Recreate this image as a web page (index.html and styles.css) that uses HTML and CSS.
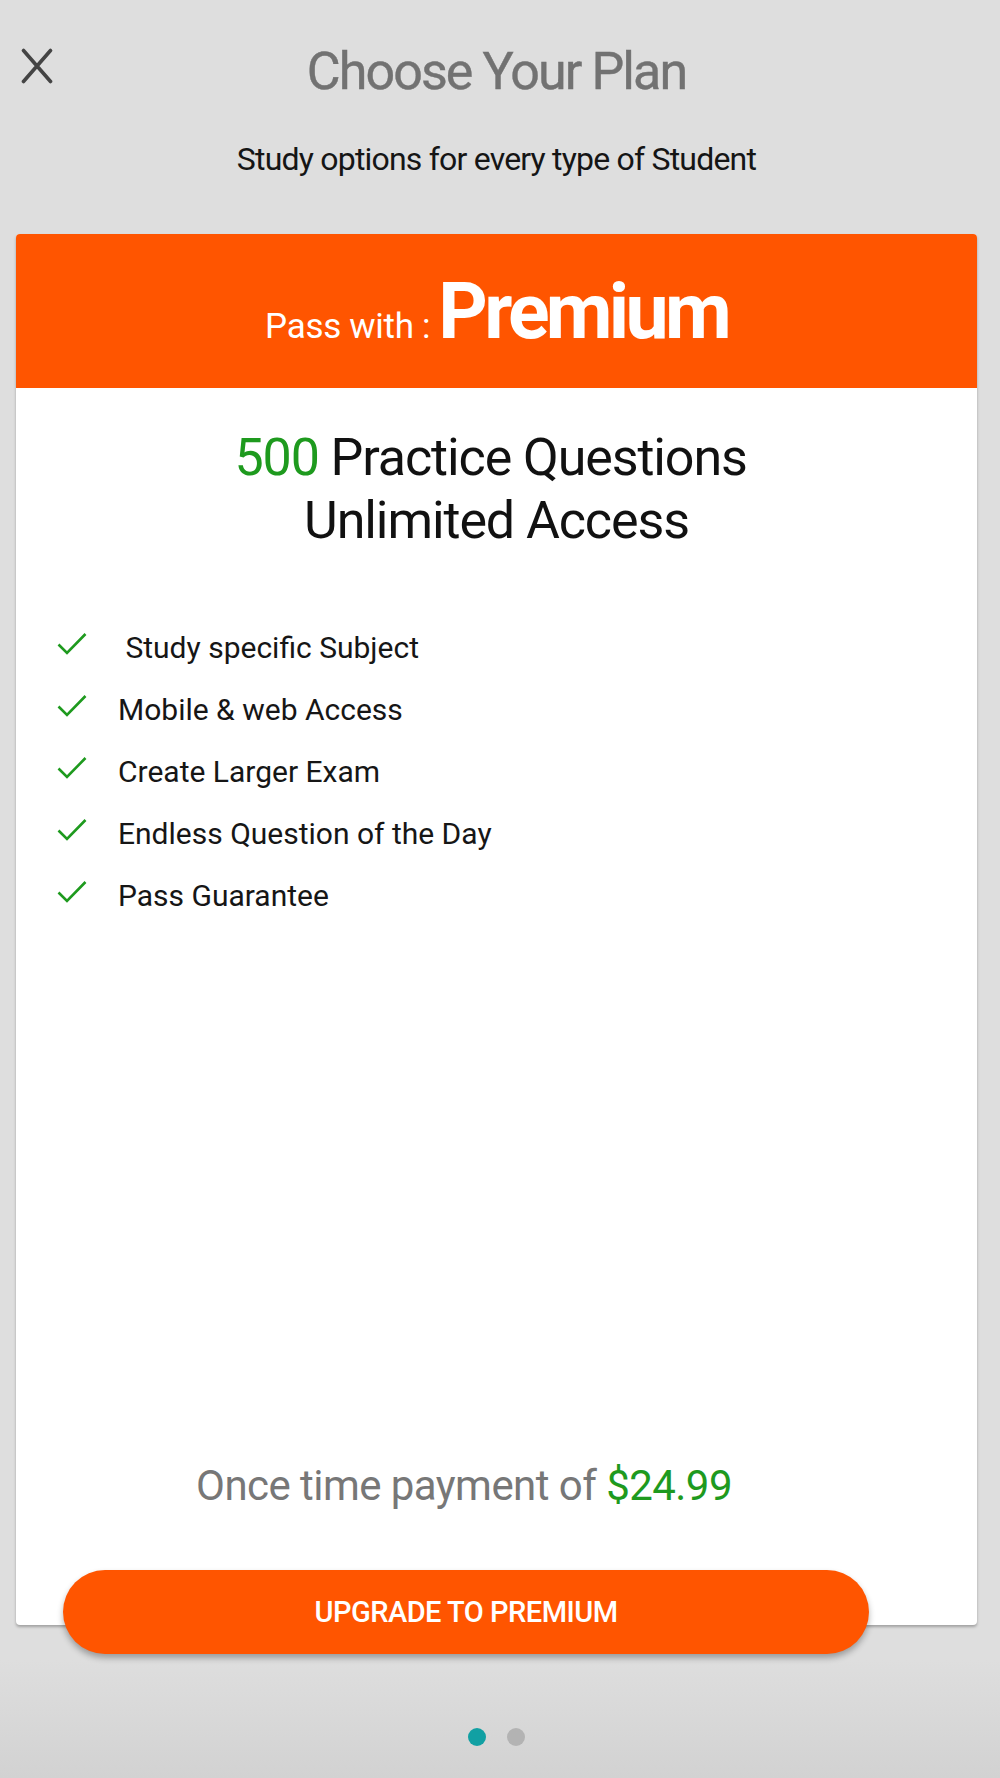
FILE: index.html
```html
<!DOCTYPE html>
<html lang="en">
<head>
<meta charset="utf-8">
<title>Choose Your Plan</title>
<link rel="stylesheet" href="styles.css">
</head>
<body>
<div class="page">
  <header class="top">
    <button class="close" aria-label="Close">
      <svg width="32" height="36" viewBox="0 0 32 36"><path d="M2.5 2.5 L29.5 33.5 M29.5 2.5 L2.5 33.5" stroke="#444" stroke-width="3.6" stroke-linecap="round" fill="none"/></svg>
    </button>
    <h1 class="title">Choose Your Plan</h1>
    <span class="spacer"></span>
  </header>
  <p class="subtitle">Study options for every type of Student</p>

  <section class="card">
    <div class="card-head">
      <span class="pass">Pass with :</span>
      <span class="plan">Premium</span>
    </div>
    <h2 class="headline"><span class="num">500</span> Practice Questions&nbsp;<br>Unlimited Access</h2>
    <ul class="features">
      <li><svg class="check" width="30" height="24" viewBox="0 0 30 24"><path d="M1.5 12.5 L10 21 L28.5 2" stroke="#1e9a1e" stroke-width="2.6" fill="none"/></svg><span class="lead">&nbsp;Study specific Subject</span></li>
      <li><svg class="check" width="30" height="24" viewBox="0 0 30 24"><path d="M1.5 12.5 L10 21 L28.5 2" stroke="#1e9a1e" stroke-width="2.6" fill="none"/></svg><span>Mobile &amp; web Access</span></li>
      <li><svg class="check" width="30" height="24" viewBox="0 0 30 24"><path d="M1.5 12.5 L10 21 L28.5 2" stroke="#1e9a1e" stroke-width="2.6" fill="none"/></svg><span>Create Larger Exam</span></li>
      <li><svg class="check" width="30" height="24" viewBox="0 0 30 24"><path d="M1.5 12.5 L10 21 L28.5 2" stroke="#1e9a1e" stroke-width="2.6" fill="none"/></svg><span>Endless Question of the Day</span></li>
      <li><svg class="check" width="30" height="24" viewBox="0 0 30 24"><path d="M1.5 12.5 L10 21 L28.5 2" stroke="#1e9a1e" stroke-width="2.6" fill="none"/></svg><span>Pass Guarantee</span></li>
    </ul>
    <p class="price">Once time payment of <span class="amount">$24.99</span></p>
    <button class="upgrade">UPGRADE TO PREMIUM</button>
  </section>

  <div class="dots">
    <span class="dot active"></span>
    <span class="dot"></span>
  </div>
</div>
</body>
</html>
```
FILE: styles.css
```css
* { box-sizing: border-box; }
html, body {
  margin: 0;
  padding: 0;
}
body {
  background: linear-gradient(to bottom, #dedede 0, #dedede 1660px, #d2d2d2 1778px);
  font-family: Roboto, "Liberation Sans", Arial, sans-serif;
  width: 1000px;
  height: 1778px;
  overflow: hidden;
}
.page {
  padding: 40px 23px 0 16px;
}
.top {
  display: grid;
  grid-template-columns: 60px 1fr 60px;
  align-items: start;
}
.close {
  margin: 8px 0 0 5px;
  padding: 0;
  border: 0;
  background: none;
  width: 32px;
  height: 36px;
  display: block;
}
.close svg { display: block; }
.title {
  margin: 0;
  text-align: center;
  font-size: 52px;
  line-height: 64px;
  font-weight: 400;
  color: #727272;
  letter-spacing: -1.9px;
  -webkit-text-stroke: 0.4px #727272;
}
.subtitle {
  margin: 35px 0 0;
  text-align: center;
  font-size: 32px;
  line-height: 40px;
  color: #151515;
  letter-spacing: -0.8px;
}
.card {
  margin-top: 55px;
  height: 1391px;
  background: #fff;
  border-radius: 4px;
  box-shadow: 0 2px 3px rgba(0,0,0,0.28);
  display: flex;
  flex-direction: column;
}
.card-head {
  height: 154px;
  background: #ff5500;
  border-radius: 4px 4px 0 0;
  display: flex;
  justify-content: center;
  align-items: baseline;
  padding-top: 33px;
  color: #fff;
}
.pass {
  font-size: 35px;
  line-height: 90px;
  letter-spacing: -0.3px;
  margin-right: 8px;
}
.plan {
  font-size: 77px;
  line-height: 90px;
  font-weight: 700;
  letter-spacing: -3.7px;
}
.headline {
  margin: 38px 0 0;
  text-align: center;
  font-size: 52px;
  line-height: 63px;
  font-weight: 400;
  color: #111;
  letter-spacing: -1.1px;
}
.num { color: #1e9a1e; }
.features {
  list-style: none;
  margin: 65px 0 0;
  padding: 0 0 0 41px;
}
.features li {
  display: flex;
  align-items: flex-start;
  height: 62px;
  font-size: 30px;
  line-height: 62px;
  color: #161616;
  letter-spacing: 0;
}
.check {
  flex: none;
  margin: 15px 31px 0 0;
  display: block;
}
.price {
  margin: auto 0 0;
  padding-right: 65px;
  text-align: center;
  font-size: 42px;
  line-height: 50px;
  color: #777;
  letter-spacing: -0.55px;
}
.amount { color: #1e9a1e; }
.upgrade {
  align-self: flex-start;
  margin: 59px 0 -29px 47px;
  width: 806px;
  height: 84px;
  border: 0;
  border-radius: 42px;
  background: #ff5500;
  color: #fff;
  font-family: Roboto, "Liberation Sans", Arial, sans-serif;
  font-weight: 500;
  font-size: 29px;
  letter-spacing: -0.5px;
  box-shadow: 0 4px 6px rgba(0,0,0,0.3);
  padding: 0;
}
.dots {
  margin-top: 103px;
  display: flex;
  justify-content: center;
  gap: 21px;
}
.dot {
  width: 18px;
  height: 18px;
  border-radius: 50%;
  background: #b3b3b3;
}
.dot.active { background: #11a0a3; }
```
